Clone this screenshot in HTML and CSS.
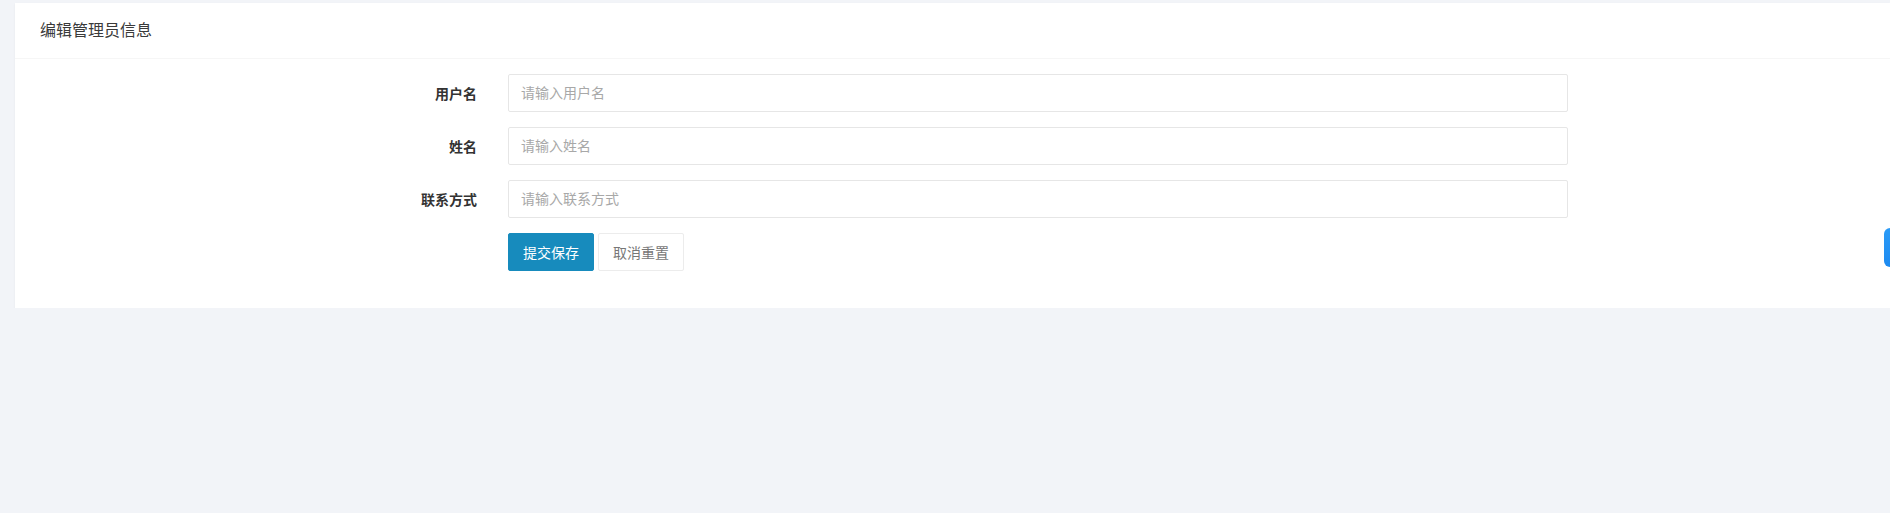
FILE: index.html
```html
<!DOCTYPE html>
<html>
	<head>
		<meta charset="UTF-8">
		<title>编辑管理员信息</title>
		<link rel="stylesheet" href="styles.css">
	</head>
	<body>
		<div class="page">
			<div class="card">
				<div class="card-header">编辑管理员信息</div>
				<form class="card-body">
					<div class="form-item">
						<label class="form-label">用户名</label>
						<input class="form-input" type="text" placeholder="请输入用户名" />
					</div>
					<div class="form-item">
						<label class="form-label">姓名</label>
						<input class="form-input" type="text" placeholder="请输入姓名" />
					</div>
					<div class="form-item">
						<label class="form-label">联系方式</label>
						<input class="form-input" type="text" placeholder="请输入联系方式" />
					</div>
					<div class="form-item">
						<span class="form-label"></span>
						<div class="btns">
							<button type="button" class="btn btn-primary">提交保存</button>
							<button type="button" class="btn btn-default">取消重置</button>
						</div>
					</div>
				</form>
			</div>
		</div>
		<div class="side-tab"></div>
	</body>
</html>
```

FILE: styles.css
```css
html, body{
	margin: 0;
	padding: 0;
	background: #f2f4f8;
	font-family: "Liberation Sans", "Noto Sans CJK SC", sans-serif;
	color: #333;
}
.page{
	padding: 3px 0 0 15px;
	overflow: hidden;
}
.card{
	background: #fff;
	box-shadow: 0 1px 2px rgba(0, 0, 0, .06);
}
.card-header{
	height: 55px;
	line-height: 55px;
	padding-left: 25px;
	font-size: 16px;
	font-weight: normal;
	color: #3a3a3a;
	border-bottom: 1px solid #f6f6f6;
}
.card-body{
	margin: 0;
	padding: 15px 0 37px 368px;
	display: flex;
	flex-direction: column;
	gap: 15px;
}
.form-item{
	display: flex;
	align-items: center;
	gap: 31px;
}
.form-label{
	width: 94px;
	text-align: right;
	font-size: 14px;
	font-weight: bold;
	color: #333;
}
.form-input{
	box-sizing: border-box;
	width: 1060px;
	height: 38px;
	padding: 0 12px;
	border: 1px solid #e6e6e6;
	border-radius: 2px;
	font-family: inherit;
	font-size: 14px;
	color: #333;
	outline: none;
}
.form-input::placeholder{
	color: #a8a8a8;
}
.btns{
	display: flex;
	gap: 4px;
}
.btn{
	height: 38px;
	padding: 0 14px;
	border-radius: 2px;
	font-family: inherit;
	font-size: 14px;
	cursor: pointer;
}
.btn-primary{
	background: #178bbd;
	border: 1px solid #178bbd;
	color: #fff;
}
.btn-default{
	background: #fff;
	border: 1px solid #ececec;
	color: #777;
}
.side-tab{
	position: fixed;
	top: 228px;
	right: -20px;
	width: 26px;
	height: 39px;
	border-radius: 6px;
	background: linear-gradient(180deg, #2a9bf7, #1d8af0);
}
```
